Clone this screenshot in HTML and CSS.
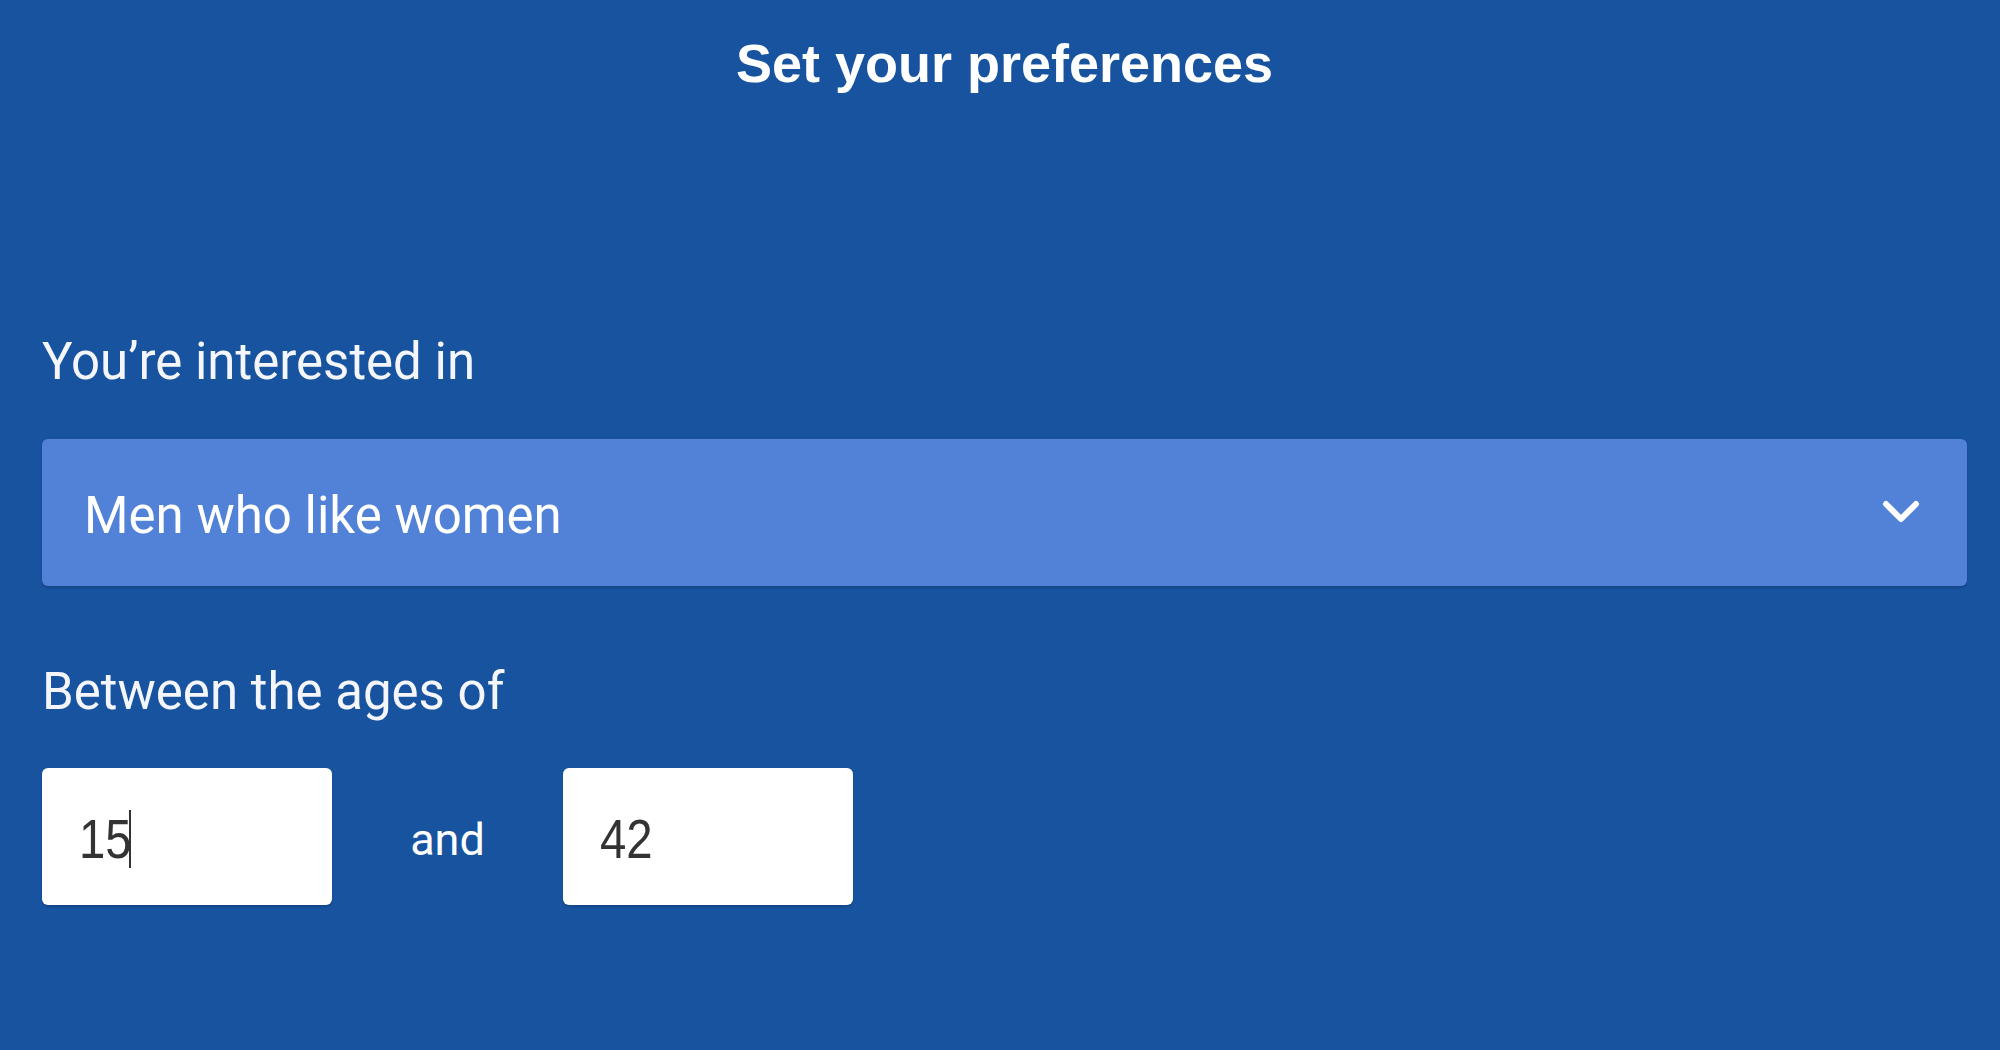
FILE: index.html
```html
<!DOCTYPE html>
<html lang="en">
<head>
    <meta charset="UTF-8">
    <meta name="viewport" content="width=device-width, initial-scale=1.0">
    <title>Set your preferences</title>
    <link rel="stylesheet" href="styles.css">
</head>
<body>

    <div class="page">
        <h1>Set your preferences</h1>

        <div class="field">
            <div class="label">You’re interested in</div>
            <div class="select">
                <span class="select-value">Men who like women</span>
                <svg class="chevron" width="40" height="28" viewBox="0 0 40 28">
                    <polyline points="5,6 20,21 35,6" fill="none" stroke="#fff" stroke-width="6" stroke-linecap="round" stroke-linejoin="round"/>
                </svg>
            </div>
        </div>

        <div class="field">
            <div class="label">Between the ages of</div>
            <div class="ages">
                <div class="age-box"><span class="age-value">15</span><span class="caret"></span></div>
                <span class="and">and</span>
                <div class="age-box"><span class="age-value">42</span></div>
            </div>
        </div>
    </div>

</body>
</html>
```

FILE: styles.css
```css
body {
    margin: 0;
    padding: 0;
    font-family: 'Roboto', 'Liberation Sans', sans-serif;
    background: #17539f;
    color: #fff;
    min-height: 100vh;
}

.page {
    padding: 33px 33px 0 42px;
}

h1 {
    margin: 0;
    font-family: 'Liberation Sans', Arial, sans-serif;
    font-size: 54px;
    line-height: 60px;
    font-weight: bold;
    text-align: center;
}

.field {
    margin-top: 239px;
}

.field + .field {
    margin-top: 76px;
}

.label {
    font-size: 51px;
    line-height: 60px;
    color: #f4f6fb;
}

.select {
    display: flex;
    justify-content: space-between;
    align-items: center;
    margin-top: 47px;
    height: 147px;
    padding: 7px 46px 0 42px;
    box-sizing: border-box;
    background: #5282d8;
    border-radius: 6px;
    box-shadow: 0 2px 2px rgba(0, 0, 0, 0.15);
}

.select-value {
    font-size: 51px;
    line-height: 60px;
}

.chevron {
    margin-top: -9px;
}

.ages {
    display: flex;
    align-items: center;
    margin-top: 46px;
}

.age-box {
    display: flex;
    align-items: center;
    width: 290px;
    height: 137px;
    padding: 4px 0 0 37px;
    box-sizing: border-box;
    background: #fff;
    border-radius: 6px;
    color: #333;
    font-family: 'Liberation Sans', Arial, sans-serif;
    font-size: 55px;
    box-shadow: 0 2px 2px rgba(0, 0, 0, 0.15);
}

.age-value {
    display: inline-block;
    transform: scaleX(0.86);
    transform-origin: left center;
    margin-right: -11px;
}

.caret {
    display: inline-block;
    width: 2px;
    height: 58px;
    background: #333;
}

.and {
    width: 231px;
    padding-top: 5px;
    text-align: center;
    font-size: 45px;
}
```
